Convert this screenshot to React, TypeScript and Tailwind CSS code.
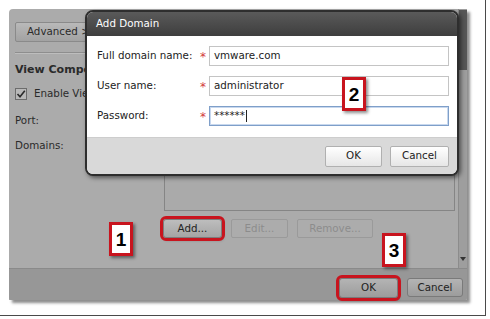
import React from "react";

const font = { fontFamily: '"DejaVu Sans", Verdana, sans-serif' };

function Badge({ n, className }: { n: string; className: string }) {
  return (
    <div
      className={`absolute w-[24px] h-[34px] bg-white border-[3px] border-[#c8141e] flex items-center justify-center shadow-[2px_2px_3px_rgba(0,0,0,0.45)] ${className}`}
    >
      <span className="text-[19px] font-bold text-black leading-none" style={{ fontFamily: '"Liberation Sans", Arial, sans-serif' }}>
        {n}
      </span>
    </div>
  );
}

export default function App() {
  return (
    <div className="w-[490px] h-[319px] bg-white overflow-hidden" style={font}>
      <div className="w-[486px] h-[316px] border-r border-b border-[#4a4a4a] pl-[9px] pt-[9px]">
        <div className="relative w-[458px] h-[291px] bg-[#ababab] rounded-tl-[4px] shadow-[3px_3px_3px_rgba(0,0,0,0.45)] flex flex-col">
          {/* top content + scrollbar */}
          <div className="flex h-[259px]">
            <div className="flex-1 flex flex-col pl-[6px] text-[10.3px] text-[#2a2a2a]">
              <div className="mt-[13px] w-[90px] h-[20px] border border-[#8a8a8a] rounded-[2px] bg-gradient-to-b from-[#b9b9b9] to-[#a2a2a2] flex items-center pl-[11px]">
                Advanced &gt;&gt;
              </div>
              <div className="mt-[10px] border-t border-[#8e8e8e] border-b border-b-[#bdbdbd] mr-[2px]" />
              <div className="mt-[9px] h-[14px] font-bold text-[11px] leading-[14px]">View Composer</div>
              <div className="mt-[11px] flex items-center h-[12px]">
                <div className="w-[12px] h-[12px] border border-[#6c6c6c] bg-[#b8b8b8] flex items-center justify-center">
                  <svg width="10" height="10" viewBox="0 0 10 10">
                    <path d="M1.5 5 L4 7.8 L8.8 1.8" stroke="#2a2a2a" strokeWidth="1.6" fill="none" />
                  </svg>
                </div>
                <span className="ml-[7px]">Enable View</span>
              </div>
              <div className="mt-[13px] h-[14px] leading-[14px]">Port:</div>
              <div className="flex mt-[11px]">
                <div className="w-[149px] h-[14px] leading-[14px]">Domains:</div>
                <div className="w-[291px] h-[77px] border border-[#858585] bg-[#aaaaaa] -mt-[4px]" />
              </div>
              <div className="flex mt-[8px] ml-[148px] gap-[9px] text-[10.3px]">
                <div className="w-[59px] h-[19px] rounded-[3px] border border-[#7d7d7d] bg-gradient-to-b from-[#bdbdbd] to-[#a5a5a5] flex items-center justify-center text-[#222] outline-[3px] outline-solid outline-[#c8141e] outline-offset-[0px] shadow-[1px_2px_3px_rgba(0,0,0,0.4)]">
                  Add...
                </div>
                <div className="w-[57px] h-[19px] rounded-[2px] border border-[#9a9a9a] bg-[#acacac] flex items-center justify-center text-[#8c8c8c]">
                  Edit...
                </div>
                <div className="w-[76px] h-[19px] rounded-[2px] border border-[#9a9a9a] bg-[#acacac] flex items-center justify-center text-[#8c8c8c]">
                  Remove...
                </div>
              </div>
            </div>
            {/* scrollbar */}
            <div className="w-[9px] flex flex-col bg-[#9e9e9e] border-l border-[#8c8c8c]">
              <div className="mt-[1px] h-[60px] bg-[#565656]" />
              <div className="flex-1" />
              <div className="h-[10px] flex items-center justify-center mb-[4px]">
                <svg width="6" height="4" viewBox="0 0 6 4">
                  <path d="M0 0 L6 0 L3 4 Z" fill="#333" />
                </svg>
              </div>
            </div>
          </div>
          {/* footer band */}
          <div className="flex-1 bg-[#979797] border-t border-[#8a8a8a] flex justify-end items-start pt-[9px] pr-[4px] gap-[9px] text-[10.3px] rounded-b-[2px]">
            <div className="w-[59px] h-[20px] rounded-[3px] border border-[#7a7a7a] bg-gradient-to-b from-[#b4b4b4] to-[#9c9c9c] flex items-center justify-center text-[#222] outline-[3px] outline-solid outline-[#c8141e] shadow-[1px_2px_3px_rgba(0,0,0,0.4)]">
              OK
            </div>
            <div className="w-[56px] h-[19px] rounded-[3px] border border-[#7a7a7a] bg-gradient-to-b from-[#b4b4b4] to-[#9c9c9c] flex items-center justify-center text-[#222]">
              Cancel
            </div>
          </div>

          {/* Modal */}
          <div className="absolute left-[76px] top-[1px] w-[374px] h-[166px] rounded-[8px] border-[2px] border-[#2e2e2e] overflow-hidden flex flex-col shadow-[2px_2px_4px_rgba(0,0,0,0.5)] bg-white">
            <div className="h-[24px] bg-gradient-to-b from-[#5a5a5a] to-[#3e3e3e] flex items-center pl-[9px] text-white text-[10.3px]">
              Add Domain
            </div>
            <div className="flex-1 bg-white flex flex-col pt-[10px] pl-[10px] pr-[8px] gap-[10px] text-[10.3px] text-[#222]">
              {[
                { label: "Full domain name:", value: "vmware.com", focus: false },
                { label: "User name:", value: "administrator", focus: false },
                { label: "Password:", value: "******", focus: true },
              ].map((r) => (
                <div key={r.label} className="flex items-center h-[20px]">
                  <div className="w-[103px]">{r.label}</div>
                  <div className="w-[9px] text-[#d23c3c] text-[12px] leading-none pt-[2px]">*</div>
                  <div
                    className={`flex-1 h-[20px] border flex items-center pl-[4px] ${
                      r.focus ? "border-[#7f9fc9] shadow-[inset_0_0_0_1px_#c8d8ee]" : "border-[#c4c4c4]"
                    }`}
                  >
                    {r.value}
                    {r.focus && <span className="inline-block w-[1px] h-[12px] bg-[#222] ml-[1px]" />}
                  </div>
                </div>
              ))}
            </div>
            <div className="h-[37px] bg-[#d9d9d9] border-t border-[#cdcdcd] flex justify-end items-center pr-[8px] gap-[8px] text-[10.3px] text-[#222]">
              <div className="w-[57px] h-[21px] rounded-[2px] border border-[#b0b0b0] bg-gradient-to-b from-white to-[#e6e6e6] flex items-center justify-center">
                OK
              </div>
              <div className="w-[59px] h-[21px] rounded-[2px] border border-[#b0b0b0] bg-gradient-to-b from-white to-[#e6e6e6] flex items-center justify-center">
                Cancel
              </div>
            </div>
          </div>

          <Badge n="1" className="left-[100px] top-[213px]" />
          <Badge n="2" className="left-[333px] top-[68px]" />
          <Badge n="3" className="left-[373px] top-[224px]" />
        </div>
      </div>
    </div>
  );
}
